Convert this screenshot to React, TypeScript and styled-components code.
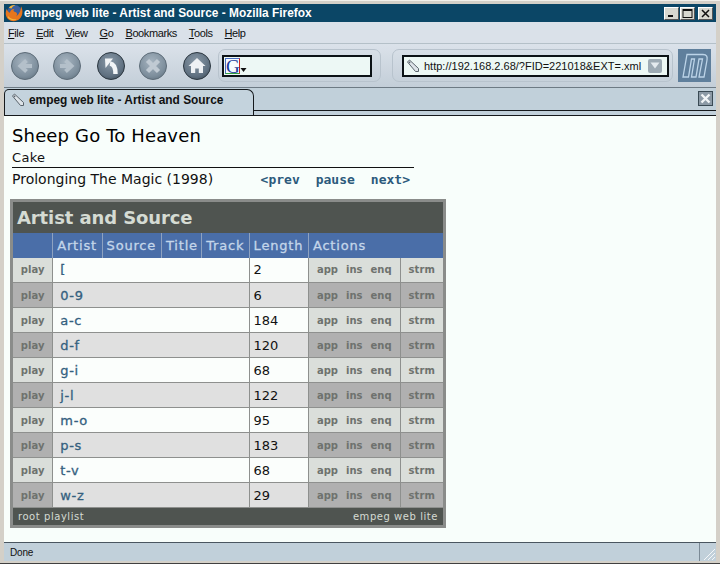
import React from 'react';
import styled, { createGlobalStyle } from 'styled-components';

const GlobalStyle = createGlobalStyle`
  html, body {
    margin: 0;
    padding: 0;
    background: #d4d0c8;
  }
  body {
    font-family: 'DejaVu Sans', Verdana, sans-serif;
  }
`;

const Window = styled.div`
  width: 720px;
  height: 564px;
  box-sizing: border-box;
  padding: 3px 4px 2px 4px;
  border-top: 1px solid #f2f0ea;
  border-bottom: 1px solid #404040;
  background: #d4d0c8;
  display: flex;
  flex-direction: column;
  overflow: hidden;
`;

const TitleBar = styled.div`
  height: 18px;
  flex: none;
  background: #0b4666;
  display: flex;
  align-items: center;
  padding: 0 3px 0 1px;
  color: #fff;
  font-family: 'Liberation Sans', Arial, sans-serif;
  font-size: 11.9px;
  font-weight: bold;
`;

const TitleText = styled.span`
  margin-left: 1px;
  flex: 1;
`;

const WinButton = styled.div`
  width: 15px;
  height: 13px;
  margin-left: 1px;
  background: #d8d8d0;
  border: 1px solid;
  border-color: #fff #555 #555 #fff;
  box-sizing: border-box;
  display: flex;
  align-items: center;
  justify-content: center;
  &:last-child {
    margin-left: 3px;
  }
`;

const MenuBar = styled.div`
  height: 22px;
  flex: none;
  box-sizing: border-box;
  background: #dae1e9;
  display: flex;
  align-items: center;
  gap: 12px;
  padding-left: 4px;
  font-family: 'Liberation Sans', Arial, sans-serif;
  font-size: 11px;
  letter-spacing: -0.4px;
  color: #101010;
  border-bottom: 1px solid #b4c0c8;
`;

const MenuItem = styled.span`
  &::first-letter {
    text-decoration: underline;
  }
`;

const Toolbar = styled.div`
  height: 44px;
  flex: none;
  box-sizing: border-box;
  background: linear-gradient(#dbe2ea, #c3ced8);
  border-bottom: 1px solid #6d7a84;
  display: flex;
  align-items: center;
  padding: 0 6px 0 7px;
`;

const NavButton = styled.div`
  width: 28px;
  height: 28px;
  flex: none;
  margin-right: 14px;
  &:nth-child(even) {
    margin-right: 16px;
  }
`;

const Field = styled.div<{ $width: number; $ml: number; $pad: string }>`
  width: ${(p) => p.$width}px;
  margin-left: ${(p) => p.$ml}px;
  padding: ${(p) => p.$pad};
  height: 33px;
  flex: none;
  box-sizing: border-box;
  border: 1px solid #b8c3cd;
  border-radius: 7px;
  display: flex;
  align-items: center;
`;

const InputBox = styled.div`
  flex: 1;
  height: 22px;
  box-sizing: border-box;
  border: 2px solid #0c1216;
  background: #edf8f5;
  display: flex;
  align-items: center;
  font-family: 'Liberation Sans', Arial, sans-serif;
  font-size: 11px;
  color: #111;
  overflow: hidden;
  white-space: nowrap;
`;

const SearchGlyph = styled.span`
  font-family: 'Liberation Serif', serif;
  font-size: 19px;
  line-height: 16px;
  width: 15px;
  height: 16px;
  margin-left: 1px;
  box-sizing: border-box;
  color: #1a3a9a;
  background: #f6fbff;
  border: 1px solid;
  border-color: #4a6ec0 #d02020 #30a040 #4a6ec0;
  text-align: center;
`;

const Url = styled.span`
  flex: 1;
  margin-left: 2px;
  display: flex;
  align-items: center;
  gap: 4px;
`;

const DropButton = styled.div`
  width: 14px;
  height: 14px;
  margin-right: 5px;
  background: #9daab4;
  border-radius: 2px;
  display: flex;
  align-items: center;
  justify-content: center;
`;

const Logo = styled.div`
  width: 33px;
  height: 33px;
  margin-left: 5px;
  flex: none;
  background: #5f7f9c;
`;

const TabBar = styled.div`
  height: 28px;
  flex: none;
  box-sizing: border-box;
  background: #c1d0da;
  border-bottom: 1px solid #15191c;
  display: flex;
  padding-top: 1px;
`;

const TabLine = styled.div`
  flex: 1;
  height: 22px;
  box-sizing: border-box;
  border-bottom: 1px solid #15191c;
  display: flex;
  justify-content: flex-end;
  padding: 2px 3px 0 0;
`;

const Tab = styled.div`
  width: 250px;
  height: 26px;
  box-sizing: border-box;
  border: 1px solid #15191c;
  border-bottom: none;
  border-radius: 5px 7px 0 0;
  background: #c4d3dd;
  display: flex;
  align-items: center;
  padding: 0 0 6px 6px;
  font-family: 'Liberation Sans', Arial, sans-serif;
  font-size: 11.9px;
  font-weight: bold;
  color: #111;
  gap: 4px;
`;

const TabClose = styled.div`
  width: 15px;
  height: 15px;
  box-sizing: border-box;
  border: 1px solid #3a4a54;
  background: #8c9aa6;
  display: flex;
  align-items: center;
  justify-content: center;
`;

const Page = styled.div`
  flex: 1;
  min-height: 0;
  background: #f8fefb;
  padding: 8px 0 0 8px;
  color: #111;
`;

const Song = styled.div`
  font-size: 18px;
  line-height: 24px;
  letter-spacing: 0.15px;
  color: #000;
`;

const Artist = styled.div`
  font-size: 13px;
  line-height: 19px;
  letter-spacing: 0.3px;
`;

const NowPlaying = styled.div`
  width: 402px;
  box-sizing: border-box;
  border-top: 1px solid #111;
  display: flex;
  justify-content: space-between;
  align-items: center;
  height: 23px;
  font-size: 14px;
  padding-right: 4px;
`;

const Transport = styled.div`
  display: flex;
  gap: 16px;
  font-family: 'DejaVu Sans Mono', monospace;
  font-weight: bold;
  font-size: 13px;
  color: #2c5a7c;
`;

const Panel = styled.table`
  margin: 9px 0 0 -2px;
  width: 436px;
  box-sizing: border-box;
  border: 3px solid #8a8c8a;
  border-collapse: collapse;
  table-layout: fixed;
  font-size: 13px;
`;

const PanelTitle = styled.th`
  height: 32px;
  box-sizing: border-box;
  padding: 0 0 0 4px;
  background: #4f5450;
  color: #d5dbd3;
  font-size: 18px;
  letter-spacing: -0.1px;
  font-weight: bold;
  text-align: left;
`;

const Head = styled.th`
  height: 25px;
  box-sizing: border-box;
  padding: 0 0 0 4px;
  background: #4a6ea8;
  color: #c4d6ea;
  font-size: 13px;
  font-weight: normal;
  letter-spacing: 0.8px;
  -webkit-text-stroke: 0.3px #c4d6ea;
  text-align: left;
  border-left: 1px solid #8ea2c0;
  &:first-child {
    border-left: none;
  }
`;

const Cell = styled.td<{ $alt: boolean }>`
  height: 25px;
  box-sizing: border-box;
  padding: 0 0 0 4px;
  background: ${(p) => (p.$alt ? '#e0e0e0' : '#fbfefc')};
  border: 1px solid #8e908e;
  border-width: 0 0 1px 1px;
`;

const ActionCell = styled.td<{ $alt: boolean }>`
  height: 25px;
  box-sizing: border-box;
  padding: 0;
  text-align: center;
  background: ${(p) => (p.$alt ? '#b0b0b0' : '#dadeda')};
  color: #6e726e;
  font-size: 10px;
  font-weight: bold;
  border: 1px solid #8e908e;
  border-width: 0 0 1px 1px;
  &:first-child {
    border-left: none;
  }
`;

const Actions = styled.div`
  display: flex;
  justify-content: center;
  gap: 8px;
`;

const Strm = styled.span`
  letter-spacing: 0.1px;
`;

const RowLink = styled.a`
  color: #34607f;
  font-weight: normal;
  letter-spacing: 0.7px;
  -webkit-text-stroke: 0.3px #34607f;
  margin-left: 3px;
`;

const Footer = styled.td`
  height: 19px;
  box-sizing: border-box;
  padding: 0 5px;
  background: #4f5450;
  color: #d5dbd3;
  font-size: 10px;
  letter-spacing: 0.55px;
`;

const FooterRow = styled.div`
  display: flex;
  justify-content: space-between;
`;

const StatusBar = styled.div`
  height: 19px;
  flex: none;
  box-sizing: border-box;
  border-top: 1px solid #4a5660;
  background: #c1d0da;
  display: flex;
  align-items: center;
  font-size: 10px;
  letter-spacing: -0.2px;
  font-family: 'Liberation Sans', Arial, sans-serif;
  color: #111;
  padding-left: 6px;
`;

const StatusText = styled.span`
  flex: 1;
`;

const Grip = styled.div`
  width: 17px;
  height: 100%;
  box-sizing: border-box;
  border-left: 1px solid #7b8a96;
  display: flex;
  justify-content: flex-end;
  align-items: flex-end;
`;

const rows: [string, number][] = [
  ['[', 2],
  ['0-9', 6],
  ['a-c', 184],
  ['d-f', 120],
  ['g-i', 68],
  ['j-l', 122],
  ['m-o', 95],
  ['p-s', 183],
  ['t-v', 68],
  ['w-z', 29],
];

const menus = ['File', 'Edit', 'View', 'Go', 'Bookmarks', 'Tools', 'Help'];
const columns = [41, 49, 59, 40, 47, 59, 91, 44];

const Nav: React.FC<{ id: string; dark?: boolean; children: React.ReactNode }> = ({ id, dark, children }) => (
  <NavButton>
    <svg width="28" height="28" viewBox="0 0 28 28">
      <defs>
        <radialGradient id={id} cx="0.45" cy="0.35" r="0.75">
          <stop offset="0" stopColor={dark ? '#8a9aa8' : '#a6b4c0'} />
          <stop offset="0.7" stopColor={dark ? '#5f7080' : '#7d8e9c'} />
          <stop offset="1" stopColor={dark ? '#3a4854' : '#5f707e'} />
        </radialGradient>
      </defs>
      <circle cx="14" cy="14" r="13.5" fill={`url(#${id})`} stroke={dark ? '#2c3740' : '#5d6c78'} />
      {children}
    </svg>
  </NavButton>
);

const PageIcon: React.FC = () => (
  <svg width="14" height="14" viewBox="0 0 14 14">
    <path d="M1.5 3 L3.5 1 L12.5 9.5 L12.5 12.5 L9.5 12.5 Z" fill="#dde3e8" stroke="#5a646c" strokeWidth="1" />
    <circle cx="3.6" cy="3.4" r="0.8" fill="#5a646c" />
  </svg>
);

const FirefoxIcon: React.FC = () => (
  <svg width="18" height="18" viewBox="0 0 16 16">
    <circle cx="8.5" cy="7.5" r="6.6" fill="#3c5f9c" />
    <path d="M14.2 2 C16.2 5.5 16 10.4 12.8 13.4 C9.6 16.2 4.6 15.8 2 12.6 C0.3 10.5 0.2 7 1.6 4.2 C2 6 3 7.2 4.4 7.8 C4.6 5.6 6.4 4.2 8.4 4.4 C7 5.6 7.4 6.6 9 7 C10.8 7.5 11.4 9.6 9.8 11 C12 10 14.4 6.4 14.2 2 Z" fill="#e8761c" />
    <path d="M3.4 3.4 C4.8 1.4 7 0.6 9.2 1 C7.6 1.6 6.2 2.6 5.8 4 Z" fill="#f4b63c" />
    <path d="M2.6 12 C4.4 14.4 8 15 10.6 13.6 C8 13.8 5 13.2 2.6 10.6 Z" fill="#f4b63c" />
  </svg>
);

const App: React.FC = function () {
  return (
    <Window>
      <GlobalStyle />
      <TitleBar>
        <FirefoxIcon />
        <TitleText>empeg web lite - Artist and Source - Mozilla Firefox</TitleText>
        <WinButton>
          <svg width="9" height="9" viewBox="0 0 9 9"><rect x="1" y="6" width="5" height="2" fill="#111" /></svg>
        </WinButton>
        <WinButton>
          <svg width="11" height="9" viewBox="0 0 11 9"><rect x="1" y="0.5" width="9" height="8" fill="none" stroke="#111" /><rect x="1" y="0" width="9" height="2" fill="#111" /></svg>
        </WinButton>
        <WinButton>
          <svg width="9" height="9" viewBox="0 0 9 9"><path d="M1 1 L8 8 M8 1 L1 8" stroke="#111" strokeWidth="1.5" /></svg>
        </WinButton>
      </TitleBar>
      <MenuBar>
        {menus.map((m) => (
          <MenuItem key={m}>{m}</MenuItem>
        ))}
      </MenuBar>
      <Toolbar>
        <Nav id="back">
          <path d="M21 14 H12 M15.5 8.5 L9.5 14 L15.5 19.5" fill="none" stroke="#b4c0ca" strokeWidth="4" />
        </Nav>
        <Nav id="fwd">
          <path d="M7 14 H16 M12.5 8.5 L18.5 14 L12.5 19.5" fill="none" stroke="#b4c0ca" strokeWidth="4" />
        </Nav>
        <Nav id="reload" dark>
          <path d="M18.5 22 C18.5 15 17 12 13 11.5" fill="none" stroke="#f2f5f7" strokeWidth="4.5" />
          <path d="M8 6.5 H16 L8.5 16 Z" fill="#f2f5f7" />
        </Nav>
        <Nav id="stop">
          <path d="M8.5 8.5 L19.5 19.5 M19.5 8.5 L8.5 19.5" stroke="#c0cad3" strokeWidth="4.5" />
        </Nav>
        <Nav id="home" dark>
          <path d="M14 6 L22.5 14 H20 V21 H15.8 V16.5 H12.2 V21 H8 V14 H5.5 Z" fill="#eef1f4" />
        </Nav>
        <Field $width={163} $ml={-7} $pad="0 8px 0 3px">
          <InputBox>
            <SearchGlyph>G</SearchGlyph>
            <svg width="7" height="16" viewBox="0 0 7 16"><path d="M0.5 10 H6.5 L3.5 14 Z" fill="#111" /></svg>
          </InputBox>
        </Field>
        <Field $width={281} $ml={11} $pad="0 3px 0 9px">
          <InputBox>
            <Url>
              <PageIcon />
              http://192.168.2.68/?FID=221018&amp;EXT=.xml
            </Url>
            <DropButton>
              <svg width="10" height="7" viewBox="0 0 10 7"><path d="M0.5 0.5 H9.5 L5 6.5 Z" fill="#e4eaee" /></svg>
            </DropButton>
          </InputBox>
        </Field>
        <Logo>
          <svg width="33" height="33" viewBox="0 0 33 33" fill="none" stroke="#bcd4e8" strokeWidth="1.3">
            <path d="M9 5.5 H25 C29 5.5 29.5 8 29 11 L26 28 H21 L24.5 10 H21 L18 28 H13.5 L16.5 10 H13.5 L10.5 28 H5 Z" />
          </svg>
        </Logo>
      </Toolbar>
      <TabBar>
        <Tab>
          <PageIcon />
          empeg web lite - Artist and Source
        </Tab>
        <TabLine>
          <TabClose>
            <svg width="11" height="11" viewBox="0 0 11 11"><path d="M1.5 1.5 L9.5 9.5 M9.5 1.5 L1.5 9.5" stroke="#f2f5f7" strokeWidth="2.4" /></svg>
          </TabClose>
        </TabLine>
      </TabBar>
      <Page>
        <Song>Sheep Go To Heaven</Song>
        <Artist>Cake</Artist>
        <NowPlaying>
          <span>Prolonging The Magic (1998)</span>
          <Transport>
            <span>&lt;prev</span>
            <span>pause</span>
            <span>next&gt;</span>
          </Transport>
        </NowPlaying>
        <Panel>
          <colgroup>
            {columns.map((w, i) => (
              <col key={i} width={w} />
            ))}
          </colgroup>
          <thead>
            <tr>
              <PanelTitle colSpan={8}>Artist and Source</PanelTitle>
            </tr>
            <tr>
              <Head></Head>
              <Head>Artist</Head>
              <Head>Source</Head>
              <Head>Title</Head>
              <Head>Track</Head>
              <Head>Length</Head>
              <Head colSpan={2}>Actions</Head>
            </tr>
          </thead>
          <tbody>
            {rows.map(([name, count], i) => (
              <tr key={name}>
                <ActionCell $alt={i % 2 === 1}>play</ActionCell>
                <Cell $alt={i % 2 === 1} colSpan={4}>
                  <RowLink>{name}</RowLink>
                </Cell>
                <Cell $alt={i % 2 === 1}>{count}</Cell>
                <ActionCell $alt={i % 2 === 1}>
                  <Actions>
                    <span>app</span>
                    <span>ins</span>
                    <span>enq</span>
                  </Actions>
                </ActionCell>
                <ActionCell $alt={i % 2 === 1}>
                  <Strm>strm</Strm>
                </ActionCell>
              </tr>
            ))}
            <tr>
              <Footer colSpan={8}>
                <FooterRow>
                  <span>root playlist</span>
                  <span>empeg web lite</span>
                </FooterRow>
              </Footer>
            </tr>
          </tbody>
        </Panel>
      </Page>
      <StatusBar>
        <StatusText>Done</StatusText>
        <Grip>
          <svg width="15" height="15" viewBox="0 0 15 15"><path d="M3 14 L14 3 M7 14 L14 7 M11 14 L14 11" stroke="#f4f6f8" strokeWidth="1" /></svg>
        </Grip>
      </StatusBar>
    </Window>
  );
};

export default App;
